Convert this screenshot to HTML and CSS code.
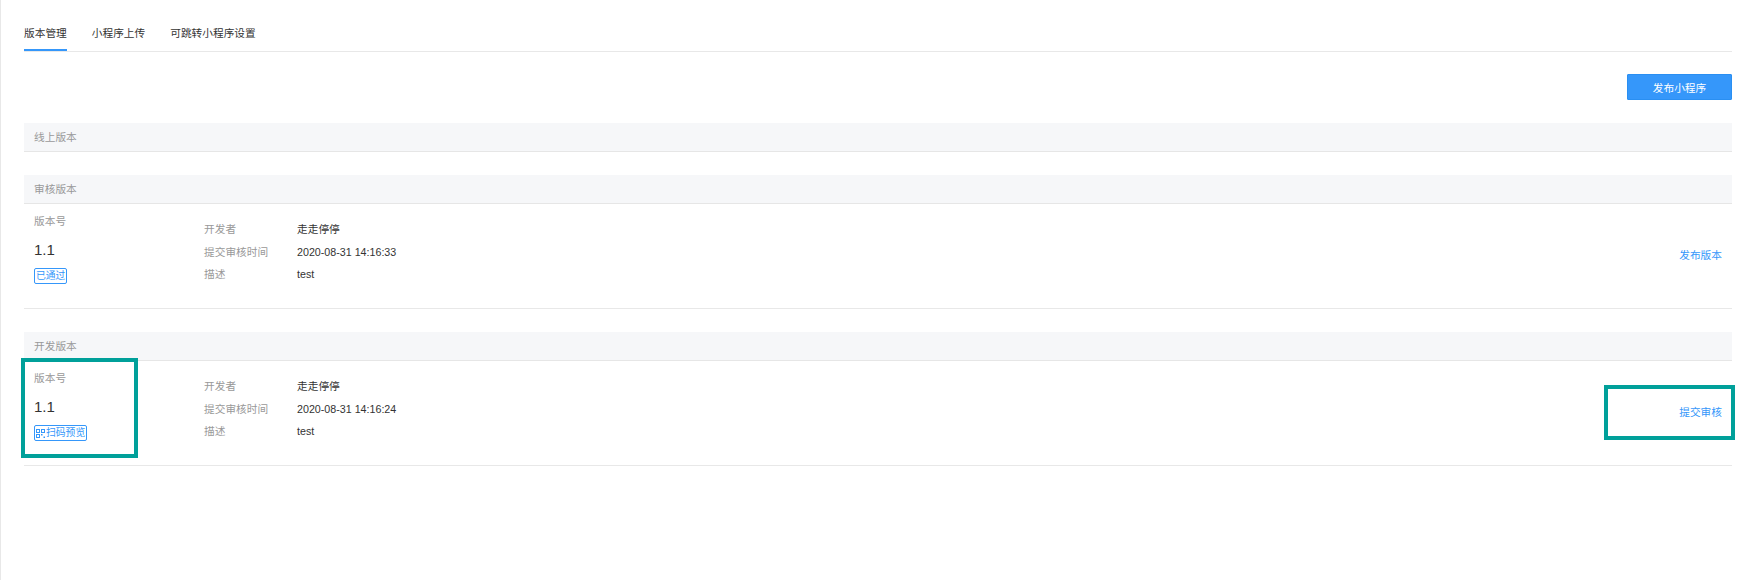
FILE: index.html
```html
<!DOCTYPE html>
<html lang="zh-CN">
<head>
  <meta charset="UTF-8" />
  <title>版本管理</title>
  <meta name="viewport" content="width=device-width, initial-scale=1" />
  <link rel="stylesheet" href="styles.css">
</head>
<body>
  <div class="page">

    <div class="tabs">
      <div class="tab active">版本管理</div>
      <div class="tab">小程序上传</div>
      <div class="tab">可跳转小程序设置</div>
    </div>

    <div class="toolbar">
      <button class="btn-primary">发布小程序</button>
    </div>

    <div class="section">
      <div class="section-head">线上版本</div>
    </div>

    <div class="section">
      <div class="section-head">审核版本</div>
      <div class="version-row">
        <div class="version-col">
          <div class="muted">版本号</div>
          <div class="version-num">1.1</div>
          <span class="tag">已通过</span>
        </div>
        <div class="info">
          <div class="info-line"><span class="info-label">开发者</span><span class="info-value">走走停停</span></div>
          <div class="info-line"><span class="info-label">提交审核时间</span><span class="info-value">2020-08-31 14:16:33</span></div>
          <div class="info-line"><span class="info-label">描述</span><span class="info-value">test</span></div>
        </div>
        <a class="action" href="#">发布版本</a>
      </div>
    </div>

    <div class="section">
      <div class="section-head">开发版本</div>
      <div class="version-row">
        <div class="version-col">
          <div class="muted">版本号</div>
          <div class="version-num">1.1</div>
          <span class="tag">
            <svg class="qr" width="9" height="9" viewBox="0 0 9 9">
              <rect x="0.5" y="0.5" width="3" height="3" fill="none" stroke="#3597fa" stroke-width="1"/>
              <rect x="5.5" y="0.5" width="3" height="3" fill="none" stroke="#3597fa" stroke-width="1"/>
              <rect x="0.5" y="5.5" width="3" height="3" fill="none" stroke="#3597fa" stroke-width="1"/>
              <rect x="5" y="5" width="1.5" height="1.5" fill="#3597fa"/>
              <rect x="7.5" y="7.5" width="1.5" height="1.5" fill="#3597fa"/>
            </svg>扫码预览</span>
        </div>
        <div class="info">
          <div class="info-line"><span class="info-label">开发者</span><span class="info-value">走走停停</span></div>
          <div class="info-line"><span class="info-label">提交审核时间</span><span class="info-value">2020-08-31 14:16:24</span></div>
          <div class="info-line"><span class="info-label">描述</span><span class="info-value">test</span></div>
        </div>
        <a class="action" href="#">提交审核</a>

        <!-- marcas de anotación -->
        <div class="mark mark-version"></div>
        <div class="mark mark-action"></div>
      </div>
    </div>

  </div>
</body>
</html>
```

FILE: styles.css
```css
body {
  margin: 0;
  font-family: "Liberation Sans", "Noto Sans CJK SC", sans-serif;
  font-size: 10.7px;
  color: #333;
  background: #fff;
  border-left: 1px solid #e8e8e8;
  min-height: 580px;
  box-sizing: border-box;
}
.page {
  padding: 0 12px 0 23px;
}
.tabs {
  display: flex;
  padding-top: 25px;
  border-bottom: 1px solid #e8e8e8;
}
.tab {
  line-height: 16px;
  padding-bottom: 8px;
  margin-right: 25px;
  border-bottom: 2px solid transparent;
}
.tab.active {
  border-bottom-color: #3597fa;
}
.toolbar {
  display: flex;
  justify-content: flex-end;
  margin-top: 22px;
  margin-bottom: 23px;
}
.btn-primary {
  width: 105px;
  height: 26px;
  background: #3597fa;
  border: 1px solid #2a8ff2;
  border-radius: 1px;
  color: #fff;
  font-family: inherit;
  font-size: 10.7px;
}
.section {
  margin-bottom: 23px;
}
.section-head {
  height: 28px;
  line-height: 28px;
  padding-left: 10px;
  background: #f6f7f9;
  border-bottom: 1px solid #e6e6e6;
  color: #999;
}
.version-row {
  position: relative;
  display: flex;
  height: 104px;
  border-bottom: 1px solid #e8e8e8;
}
.version-col {
  width: 170px;
  padding: 9px 0 0 10px;
}
.muted {
  line-height: 16px;
  color: #999;
}
.version-num {
  margin-top: 11px;
  font-size: 15px;
  line-height: 20px;
  color: #333;
}
.tag {
  display: inline-flex;
  align-items: center;
  margin-top: 8px;
  height: 14px;
  padding: 0 1px;
  border: 1px solid #3597fa;
  border-radius: 2px;
  color: #3597fa;
  font-size: 9.8px;
  line-height: 14px;
}
.qr {
  margin-right: 1px;
}
.info {
  flex: 1;
  padding-top: 14px;
}
.info-line {
  display: flex;
  line-height: 22.5px;
}
.info-label {
  width: 93px;
  color: #999;
}
.info-value {
  color: #333;
}
.action {
  align-self: center;
  margin: 0 10px 4px 0;
  color: #3597fa;
  text-decoration: none;
}
.mark {
  position: absolute;
  border: 4px solid #00a09a;
  box-sizing: border-box;
}
.mark-version {
  left: -3px;
  top: -3px;
  width: 117px;
  height: 100px;
}
.mark-action {
  right: -3px;
  top: 24px;
  width: 131px;
  height: 55px;
}
```
